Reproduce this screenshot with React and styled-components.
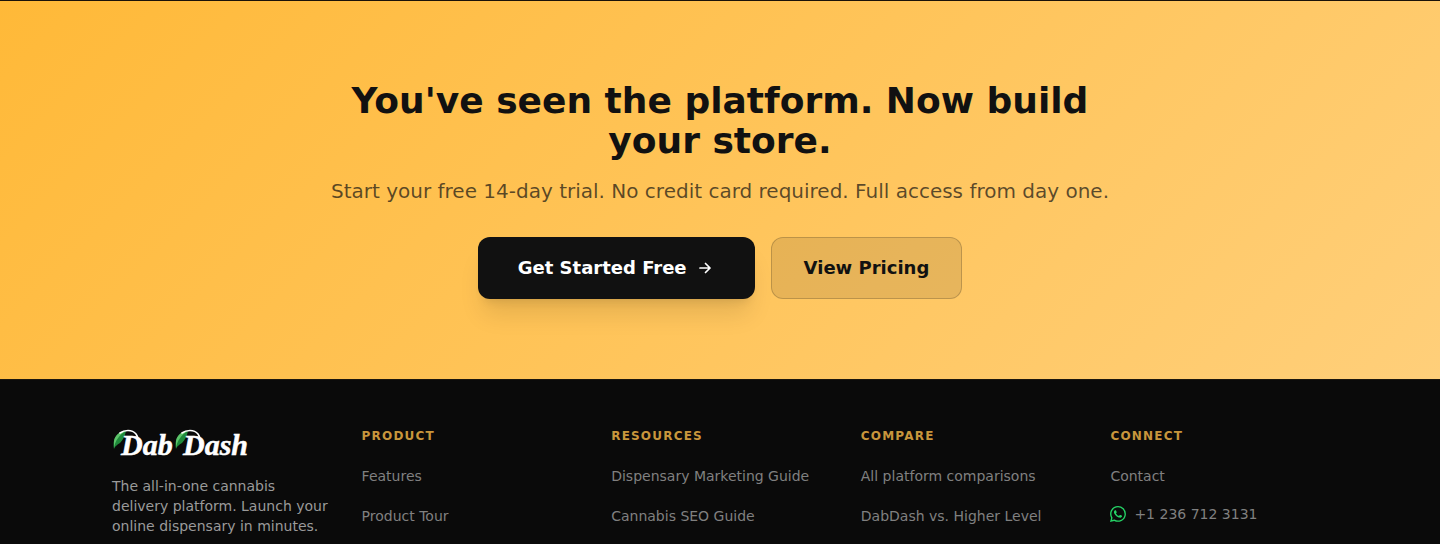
import React from "react";
import styled, { createGlobalStyle } from "styled-components";
import { BsWhatsapp } from "react-icons/bs";

const productLinks = ["Features", "Product Tour"];
const resourceLinks = ["Dispensary Marketing Guide", "Cannabis SEO Guide"];
const compareLinks = ["All platform comparisons", "DabDash vs. Higher Level"];

const Leaf = ({ x }) => (
	<g transform={`translate(${x} 0)`}>
		<path d="M1 21C-1 12 3 4 13 3C12 8 10 12 7 15C4 17 2 18 1 21Z" fill="#1f8a3b" />
		<path d="M1 20C2 13 6 7 13 3C7 3 2 7 1 13Z" fill="#5cc46a" />
		<path d="M7 5C11 2 19 1 23 6C25 9 26 12 25 15" fill="none" stroke="#fff" strokeWidth="1.6" strokeLinecap="round" />
	</g>
);

const Logo = () => (
	<LogoSvg width="140" height="32" viewBox="0 0 140 32" role="img" aria-label="Dab Dash">
		<Leaf x={1} />
		<Leaf x={63} />
		<LogoText x="9" y="27">Dab</LogoText>
		<LogoText x="71" y="27">Dash</LogoText>
	</LogoSvg>
);

const ArrowIcon = () => (
	<svg
		width="20"
		height="20"
		viewBox="0 0 20 20"
		fill="none"
		stroke="currentColor"
		strokeWidth="1.7"
		strokeLinecap="round"
		strokeLinejoin="round"
		aria-hidden="true"
	>
		<path d="M5 10h10M10.5 5.5L15 10l-4.5 4.5" />
	</svg>
);

const LinkColumn = ({ title, links }) => (
	<nav aria-label={title}>
		<ColumnTitle>{title}</ColumnTitle>
		<LinkList>
			{links.map((link) => (
				<li key={link}>
					<FooterLink href="#">{link}</FooterLink>
				</li>
			))}
		</LinkList>
	</nav>
);

const App = () => {
	return (
		<>
			<GlobalStyle />
			<Cta>
				<CtaInner>
					<Title>You've seen the platform. Now build your store.</Title>
					<Subtitle>
						Start your free 14-day trial. No credit card required. Full access from day one.
					</Subtitle>
					<Actions>
						<PrimaryButton type="button">
							Get Started Free
							<ArrowIcon />
						</PrimaryButton>
						<SecondaryButton type="button">View Pricing</SecondaryButton>
					</Actions>
				</CtaInner>
			</Cta>
			<Footer>
				<FooterGrid>
					<div>
						<HomeLink href="#">
							<Logo />
						</HomeLink>
						<About>
							The all-in-one cannabis delivery platform. Launch your online dispensary in minutes.
						</About>
					</div>
					<LinkColumn title="Product" links={productLinks} />
					<LinkColumn title="Resources" links={resourceLinks} />
					<LinkColumn title="Compare" links={compareLinks} />
					<nav aria-label="Connect">
						<ColumnTitle>Connect</ColumnTitle>
						<LinkList>
							<li>
								<FooterLink href="#">Contact</FooterLink>
							</li>
							<li>
								<PhoneLink href="tel:+12367123131">
									<BsWhatsapp size={16} color="#25d366" aria-hidden="true" />
									+1 236 712 3131
								</PhoneLink>
							</li>
						</LinkList>
					</nav>
				</FooterGrid>
			</Footer>
		</>
	);
};

const GlobalStyle = createGlobalStyle`
	* {
		box-sizing: border-box;
		margin: 0;
		padding: 0;
	}
	body {
		background: #0a0a0a;
		font-family: "DejaVu Sans", sans-serif;
	}
`;
const Cta = styled.section`
	background: linear-gradient(135deg, #ffb938 0%, #ffcf7a 100%);
	border-top: 1px solid #1a1208;
	padding: 80px 32px;
`;
const CtaInner = styled.div`
	max-width: 832px;
	margin: 0 auto;
	text-align: center;
`;
const Title = styled.h2`
	color: #111111;
	font-size: 36px;
	font-weight: 700;
	line-height: 40px;
`;
const Subtitle = styled.p`
	color: rgba(17, 17, 17, 0.7);
	font-size: 20px;
	line-height: 28px;
	margin-top: 16px;
`;
const Actions = styled.div`
	display: flex;
	flex-wrap: wrap;
	justify-content: center;
	gap: 16px;
	margin-top: 32px;
`;
const Button = styled.button`
	display: inline-flex;
	align-items: center;
	justify-content: center;
	gap: 8px;
	border: none;
	border-radius: 12px;
	font-family: inherit;
	font-size: 18px;
	font-weight: 700;
	line-height: 28px;
	cursor: pointer;
`;
const PrimaryButton = styled(Button)`
	background: #111111;
	color: #ffffff;
	padding: 16px 40px;
	box-shadow: 0 20px 25px -5px rgba(0, 0, 0, 0.1), 0 8px 10px -6px rgba(0, 0, 0, 0.1);
`;
const SecondaryButton = styled(Button)`
	background: rgba(17, 17, 17, 0.1);
	border: 1px solid rgba(17, 17, 17, 0.2);
	color: #111111;
	padding: 16px 32px;
`;
const Footer = styled.footer`
	background: #0a0a0a;
	border-top: 1px solid #1c170e;
	padding: 48px 32px 0;
`;
const FooterGrid = styled.div`
	display: grid;
	grid-template-columns: repeat(5, 1fr);
	gap: 32px;
	max-width: 1216px;
	margin: 0 auto;

	@media (max-width: 900px) {
		grid-template-columns: repeat(2, 1fr);
	}
`;
const HomeLink = styled.a`
	display: block;
`;
const LogoSvg = styled.svg`
	display: block;
	overflow: visible;
`;
const LogoText = styled.text`
	fill: #ffffff;
	stroke: #ffffff;
	stroke-width: 0.5px;
	font-family: "Liberation Serif", serif;
	font-size: 30px;
	font-style: italic;
	font-weight: 700;
`;
const About = styled.p`
	color: #9a9a9a;
	font-size: 14px;
	line-height: 20px;
	margin-top: 16px;
`;
const ColumnTitle = styled.h3`
	color: #c8963c;
	font-size: 12px;
	font-weight: 700;
	letter-spacing: 0.1em;
	line-height: 16px;
	text-transform: uppercase;
`;
const LinkList = styled.ul`
	display: flex;
	flex-direction: column;
	gap: 8px;
	list-style: none;
	margin-top: 16px;
`;
const FooterLink = styled.a`
	display: flex;
	align-items: center;
	min-height: 32px;
	color: #808080;
	font-size: 14px;
	line-height: 20px;
	text-decoration: none;
`;
const PhoneLink = styled(FooterLink)`
	gap: 8px;
	min-height: 28px;
`;
export default App;
